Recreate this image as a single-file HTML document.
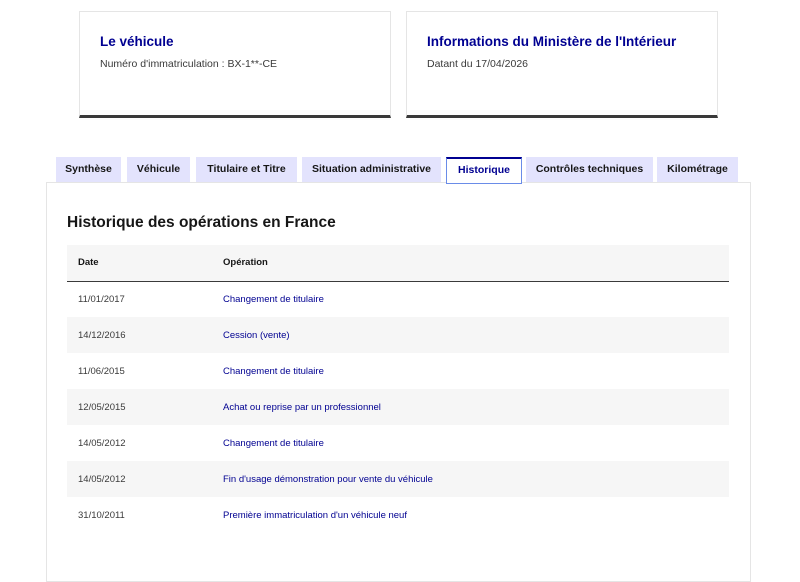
<!DOCTYPE html>
<html><head><meta charset="utf-8"><style>
*{box-sizing:border-box;margin:0;padding:0}
body{width:800px;height:569px;overflow:hidden;background:#fff;font-family:"Liberation Sans",sans-serif;color:#161616;position:relative}
.card{position:absolute;top:11px;width:312px;height:107px;border:1px solid #e5e5e5;border-bottom:3px solid #3a3a3a;padding:20px 20px}
.card h3{color:#000091;font-size:13.5px;font-weight:bold;margin-top:2px}
.card p{font-size:10.5px;color:#3a3a3a;margin-top:9px}
.tab{position:absolute;top:157px;height:25px;background:#e3e3fd;font-size:10.5px;font-weight:bold;line-height:25px;text-align:center}
.tab.act{background:#fff;border:1px solid #6a8ce8;border-top:2px solid #000091;color:#000091;line-height:22px;height:27px}
.panel{position:absolute;left:46px;top:182px;width:705px;height:400px;border:1px solid #e5e5e5}
h2{position:absolute;left:67px;top:214px;font-size:15.5px;font-weight:bold}
table{position:absolute;left:67px;top:245px;width:662px;border-collapse:collapse;font-size:9.5px}
td,th{height:36px;text-align:left;padding-left:11px}
th{background:#f6f6f6;border-bottom:1px solid #3a3a3a;font-weight:bold;height:36px}
tr:nth-child(odd) td{background:#f6f6f6}
td.op{color:#000091;padding-left:0}
th.op{padding-left:0}
td.d{color:#3a3a3a;width:156px}
</style></head><body>
<div class="card" style="left:79px"><h3>Le véhicule</h3><p>Numéro d'immatriculation : BX-1**-CE</p></div>
<div class="card" style="left:406px"><h3>Informations du Ministère de l'Intérieur</h3><p>Datant du 17/04/2026</p></div>
<div class="panel"></div>
<div class="tab" style="left:56px;width:65px">Synthèse</div>
<div class="tab" style="left:127px;width:63px">Véhicule</div>
<div class="tab" style="left:196px;width:101px">Titulaire et Titre</div>
<div class="tab" style="left:302px;width:139px">Situation administrative</div>
<div class="tab act" style="left:446px;width:76px">Historique</div>
<div class="tab" style="left:526px;width:127px">Contrôles techniques</div>
<div class="tab" style="left:657px;width:81px">Kilométrage</div>
<h2>Historique des opérations en France</h2>
<table>
<tr><th>Date</th><th class="op">Opération</th></tr>
<tr><td class="d">11/01/2017</td><td class="op">Changement de titulaire</td></tr>
<tr><td class="d">14/12/2016</td><td class="op">Cession (vente)</td></tr>
<tr><td class="d">11/06/2015</td><td class="op">Changement de titulaire</td></tr>
<tr><td class="d">12/05/2015</td><td class="op">Achat ou reprise par un professionnel</td></tr>
<tr><td class="d">14/05/2012</td><td class="op">Changement de titulaire</td></tr>
<tr><td class="d">14/05/2012</td><td class="op">Fin d'usage démonstration pour vente du véhicule</td></tr>
<tr><td class="d">31/10/2011</td><td class="op">Première immatriculation d'un véhicule neuf</td></tr>
</table>
</body></html>
